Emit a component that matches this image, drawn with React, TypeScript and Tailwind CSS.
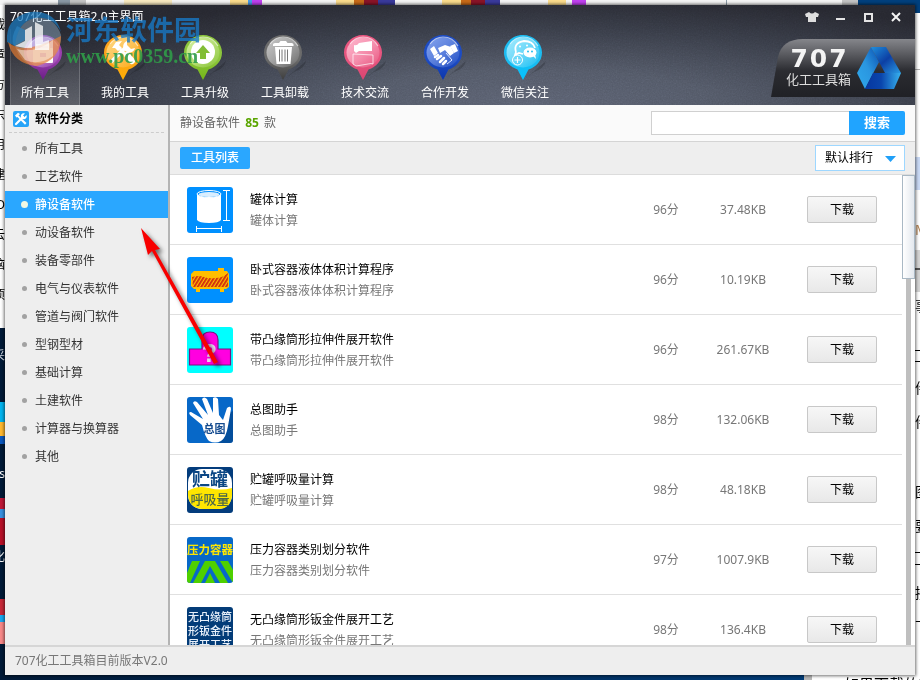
import React from "react";

const FONT = "font-['Noto_Sans','Noto_Sans_CJK_SC',sans-serif]";

/* ---------- toolbar pins ---------- */

function Pin({ id, light, mid, dark, children }: { id: string; light: string; mid: string; dark: string; children: React.ReactNode }) {
  return (
    <svg width="46" height="50" viewBox="0 0 46 50" aria-hidden="true">
      <defs>
        <linearGradient id={`pin-${id}`} x1="0" y1="0" x2="0" y2="1">
          <stop offset="0" stopColor={mid} />
          <stop offset="0.55" stopColor={mid} />
          <stop offset="1" stopColor={dark} />
        </linearGradient>
        <linearGradient id={`gloss-${id}`} x1="0" y1="0" x2="1" y2="1">
          <stop offset="0" stopColor={light} />
          <stop offset="0.55" stopColor={light} stopOpacity="0.55" />
          <stop offset="1" stopColor={light} stopOpacity="0" />
        </linearGradient>
      </defs>
      <path d="M24 45 L44 28 Q42 36 32 39 Z" fill="#000" opacity="0.18" />
      <path d="M21 2 C31.500 2 40 10 40 19.500 C40 28 34 34 26.500 36.500 L21 47 L15.500 36.500 C8 34 2 28 2 19.500 C2 10 10.500 2 21 2 Z" fill={`url(#pin-${id})`} />
      <ellipse cx="21" cy="19.500" rx="16.500" ry="15" fill={`url(#gloss-${id})`} />
      <path d="M8 11 Q13 4 21 4 Q31 4 36 13" fill="none" stroke="#fff" strokeWidth="1.200" opacity="0.6" />
      {children}
    </svg>
  );
}

const navItems = [
  {
    label: "所有工具",
    icon: (
      <Pin id="all" light="#e6b9ee" mid="#9a3fae" dark="#6a1d86">
        <path d="M15 12 h12 v4 h-12 z" fill="none" stroke="#fff" strokeWidth="2" />
        <rect x="11" y="15" width="20" height="15" rx="1" fill="#fff" />
        <rect x="18" y="20" width="6" height="4" fill="#b45fc4" />
      </Pin>
    ),
  },
  {
    label: "我的工具",
    icon: (
      <Pin id="mine" light="#ffd880" mid="#fba41c" dark="#ffae00">
        <path d="M10 28 L24 14" stroke="#fff" strokeWidth="3.500" strokeLinecap="round" />
        <path d="M25 8 A6 6 0 1 0 33 15 L29 16 L25 12 Z" fill="#fff" />
        <path d="M10 15 L14 9 L20 8 L17 12 L20 15 L16 18 L13 15 Z" fill="#fff" />
        <path d="M18 16 L23 21" stroke="#fff" strokeWidth="3" />
        <path d="M25 22 L30 28" stroke="#fff" strokeWidth="6" strokeLinecap="round" />
      </Pin>
    ),
  },
  {
    label: "工具升级",
    icon: (
      <Pin id="up" light="#d4f0a0" mid="#8cc63c" dark="#74b516">
        <circle cx="21" cy="19" r="12" fill="#fff" />
        <path d="M21 12 L28 20 H24 V26 H18 V20 H14 Z" fill="#82bd35" />
      </Pin>
    ),
  },
  {
    label: "工具卸载",
    icon: (
      <Pin id="del" light="#c8c8c8" mid="#6b6b6b" dark="#3e3e3e">
        <path d="M11 11.500 Q11 10 13 10 H17 L18.500 8 H24 L25.500 10 H29.500 Q31.500 10 31.500 11.500 V13 H11 Z" fill="#fff" />
        <path d="M13 14 H30 L28.500 31 H14.500 Z" fill="#fff" />
        <path d="M17.500 16.500 V28.500 M20 16.500 V28.500 M23 16.500 V28.500 M25.500 16.500 V28.500" stroke="#777" strokeWidth="1" />
      </Pin>
    ),
  },
  {
    label: "技术交流",
    icon: (
      <Pin id="chat" light="#ffb9cf" mid="#e8557f" dark="#d94470">
        <path d="M12 12 Q15 13 17 10 L30 8 V18 H17 L14 20 L12 18 Z" fill="#fff" />
        <path d="M11 21 L31 22 V31 L29 30.500 L14 33 L11 31 Z" fill="none" stroke="#fff" strokeWidth="1" opacity="0.7" />
      </Pin>
    ),
  },
  {
    label: "合作开发",
    icon: (
      <Pin id="co" light="#86a4ee" mid="#1d4cc4" dark="#0c36ad">
        <path d="M8 16 L12 13 L16 20 L12 23 Z M28 13 L33 11 L36 18 L32 20 Z" fill="#fff" />
        <path d="M16 15 L23 12 L29 14 L32 20 L28 23 L23 17 L18 20 Z" fill="#fff" />
        <path d="M13 24 l3 -2 M15 26 l4 -3 M18 29 l4 -4 M21 31 l3 -3" stroke="#fff" strokeWidth="2.500" strokeLinecap="round" />
        <path d="M24 20 L30 27 L25 31" fill="none" stroke="#dfe8ff" strokeWidth="1" />
      </Pin>
    ),
  },
  {
    label: "微信关注",
    icon: (
      <Pin id="wx" light="#a5ecff" mid="#1cbcf0" dark="#00c3ff">
        <path d="M14 19 Q11 10 22 8 Q31 8 33 15 M14 19 L13 22 L17 20 L21 21" fill="none" stroke="#fff" strokeWidth="1.800" />
        <circle cx="18" cy="13.500" r="1" fill="#fff" />
        <circle cx="25" cy="12.500" r="1" fill="#fff" />
        <ellipse cx="28" cy="19.500" rx="6.500" ry="5" fill="#fff" />
        <path d="M31 23 l3 3 l-1 -5 z" fill="#fff" />
        <circle cx="26" cy="18.500" r="1" fill="#23bdef" />
        <circle cx="30" cy="18.500" r="1" fill="#23bdef" />
        <circle cx="15.500" cy="27" r="5" fill="none" stroke="#fff" strokeWidth="1" />
        <path d="M12.500 27 h6 M15.500 24 v6" stroke="#fff" strokeWidth="1.200" />
      </Pin>
    ),
  },
];

/* ---------- tool thumbnails ---------- */

const thumb = "block size-[46px] shrink-0 rounded-[3px]";
const boldText = "font-['Noto_Sans_CJK_SC',sans-serif] font-bold";

const TankIcon = () => (
  <svg className={thumb} viewBox="0 0 46 46" aria-hidden="true">
    <rect width="46" height="46" fill="#0090ff" />
    <path d="M10 7 V33 Q12 36 22 36 Q32 36 34 33 V7 Z" fill="#fff" />
    <ellipse cx="22" cy="7" rx="12" ry="3.500" fill="#0090ff" stroke="#fff" strokeWidth="1" />
    <ellipse cx="22" cy="7.500" rx="10.500" ry="2.500" fill="#fff" opacity="0.85" />
    <path d="M36 3.500 h7 M36 33.500 h7 M39.500 3.500 v30 M9.500 39 v6 M34.500 39 v6 M9.500 41.500 h25" stroke="#fff" fill="none" />
  </svg>
);

const VesselIcon = () => (
  <svg className={thumb} viewBox="0 0 46 46" aria-hidden="true">
    <defs>
      <pattern id="hatch" width="3" height="3" patternUnits="userSpaceOnUse" patternTransform="rotate(32)">
        <rect width="1.800" height="3" fill="#d02a10" />
      </pattern>
    </defs>
    <rect width="46" height="46" fill="#0090ff" />
    <path d="M31 11 h6 v3 h3 l2 3 v13 l-3 2 h-2 v3 h-4 v-3 H13 v3 H9 v-3 H7 L4 29 V17 L7 14 H31 Z" fill="#ffbe00" />
    <path d="M5 20 Q12 18 17 20 T28 21 Q36 21 41 16 V30 H6 Z" fill="url(#hatch)" />
  </svg>
);

const FlangeIcon = () => (
  <svg className={thumb} viewBox="0 0 46 46" aria-hidden="true">
    <rect width="46" height="46" fill="#00ffff" />
    <path d="M15 22 V13 Q15 5 23 5 Q31 5 31 13 V22 H43.500 V38 H2.500 V22 Z" fill="#ff00e0" stroke="#7a1480" strokeWidth="1.200" />
    <text x="22.500" y="35" textAnchor="middle" fontSize="25" fill="#e8d6ee" className="font-['Liberation_Sans',sans-serif] font-bold">?</text>
  </svg>
);

const HandIcon = () => (
  <svg className={thumb} viewBox="0 0 46 46" aria-hidden="true">
    <rect width="46" height="46" fill="#0768c8" />
    <path d="M42 16 L46 14 V46 H32 Z" fill="#00336f" opacity="0.5" />
    <path d="M15 28 L3 18 Q1 15 4 15 L16 22 L6 6 Q7 3 10 5 L21 18 L15 2 Q17 -1 20 2 L26 16 L26 1 Q29 -1 31 2 L32 18 Q35 22 36 23 L40 11 Q44 8 44 12 L41 29 Q39 41 34 44 Q28 47 22 44 Q18 40 15 28 Z" fill="#fff" />
    <text x="27.500" y="36" textAnchor="middle" fontSize="11" fill="#134a8e" className={boldText}>总图</text>
  </svg>
);

const BreathIcon = () => (
  <svg className={thumb} viewBox="0 0 46 46" aria-hidden="true">
    <rect width="46" height="46" fill="#033c7c" />
    <rect x="1" y="2" width="44" height="40" rx="14" fill="#fff" />
    <path d="M1 24 Q10 18 22 21 T45 21 V28 Q44 42 31 42 H15 Q2 41 1 28 Z" fill="#ffe600" />
    <text x="23" y="19" textAnchor="middle" fontSize="18" fill="#0b4684" className={boldText}>贮罐</text>
    <text x="23" y="37" textAnchor="middle" fontSize="13" fill="#4c6848" className="font-['Noto_Sans_CJK_SC',sans-serif] font-medium">呼吸量</text>
  </svg>
);

const PressureIcon = () => (
  <svg className={thumb} viewBox="0 0 46 46" aria-hidden="true">
    <rect width="46" height="46" fill="#0768c8" />
    <text x="23" y="17" textAnchor="middle" fontSize="11.500" fill="#ffe600" className={boldText}>压力容器</text>
    <path d="M5 24 H13 L3 46 H0 V36 Z M18 24 H28 L41 46 H33 L23 29 L14 46 H6 Z M33 24 H41 L46 33 V46 Z M23 36 L28 46 H18 Z" fill="#4fd000" />
  </svg>
);

const SheetIcon = () => (
  <svg className={thumb} viewBox="0 0 46 46" aria-hidden="true">
    <rect width="46" height="46" fill="#033c78" />
    <g fontSize="11" fill="#e8f0fa" textAnchor="middle" className="font-['Noto_Sans_CJK_SC',sans-serif] font-medium">
      <text x="23" y="14">无凸缘筒</text>
      <text x="23" y="28">形钣金件</text>
      <text x="23" y="42">展开工艺</text>
    </g>
  </svg>
);

const tools = [
  { name: "罐体计算", score: "96分", size: "37.48KB", Icon: TankIcon },
  { name: "卧式容器液体体积计算程序", score: "96分", size: "10.19KB", Icon: VesselIcon },
  { name: "带凸缘筒形拉伸件展开软件", score: "96分", size: "261.67KB", Icon: FlangeIcon },
  { name: "总图助手", score: "98分", size: "132.06KB", Icon: HandIcon },
  { name: "贮罐呼吸量计算", score: "98分", size: "48.18KB", Icon: BreathIcon },
  { name: "压力容器类别划分软件", score: "97分", size: "1007.9KB", Icon: PressureIcon },
  { name: "无凸缘筒形钣金件展开工艺", score: "98分", size: "136.4KB", Icon: SheetIcon },
];

const categories = ["所有工具", "工艺软件", "静设备软件", "动设备软件", "装备零部件", "电气与仪表软件", "管道与阀门软件", "型钢型材", "基础计算", "土建软件", "计算器与换算器", "其他"];

/* ---------- desktop behind the window ---------- */

function Desktop() {
  return (
    <div className="absolute inset-0 flex flex-col overflow-hidden bg-[#001a38]" aria-hidden="true">
      <div className="flex h-[5px] shrink-0 bg-[#f4f4f4]">
        <span className="ml-[58px] w-3 bg-[#8a98a5]" />
        <span className="w-4 bg-[#c4c4c4]" />
        <span className="ml-[38px] w-12 bg-[#f8e9c0]" />
        <span className="ml-[58px] w-[18px] bg-[#fbdc8c]" />
        <span className="w-1 bg-[#4a9be8]" />
        <span className="w-[10px] bg-[#c040f0]" />
        <span className="ml-[74px] w-[18px] bg-[#fbdc8c]" />
        <span className="w-[10px] bg-[#c86a18]" />
        <span className="w-[14px] bg-[#8a1428]" />
        <span className="w-[17px] bg-[#3a3a9c]" />
        <span className="ml-[47px] w-[19px] bg-[#fbdc8c]" />
        <span className="w-[10px] bg-[#c86a18]" />
        <span className="w-[14px] bg-[#8a1428]" />
        <span className="w-[15px] bg-[#3a3a9c]" />
        <span className="ml-[48px] w-[18px] bg-[#fbdc8c]" />
        <span className="ml-[6px] w-[14px] bg-[#c040f0]" />
        <span className="ml-[140px] w-px bg-[#8a9aa5]" />
        <span className="ml-[115px] w-4 bg-[#c4c4c4]" />
        <span className="flex-1 bg-[#00407e]" />
      </div>
      <div className="flex min-h-0 flex-1 justify-between">
        <div className="flex w-[5px] flex-col overflow-hidden text-[12px] leading-[16px]">
          <div className="flex h-[323px] shrink-0 flex-col items-end gap-[14px] bg-white pt-[12px] text-black">
            <span>载</span><span>章</span><span>方</span><span>东</span><span>用</span><span>建</span><span>D</span><span>云</span><span>脑</span><span>项</span>
          </div>
          <span className="mt-[20px] flex justify-end text-[#d9dfe8]">采</span>
          <span className="mt-[38px] h-5 shrink-0 bg-[#00b4f0]" />
          <span className="h-[14px] shrink-0 bg-[#ffb930]" />
          <span className="h-[8px] shrink-0 bg-[#0a58c0]" />
          <span className="mt-[22px] flex h-4 shrink-0 justify-end text-white">s</span>
          <span className="mt-[16px] h-[11px] shrink-0 bg-[#c01838]" />
          <span className="h-[9px] shrink-0 bg-[#3890e0]" />
          <span className="h-[27px] shrink-0 bg-[#b81028]" />
          <span className="mt-[4px] flex h-4 shrink-0 justify-end text-white">化</span>
          <span className="mt-[34px] h-4 shrink-0 bg-[#c82838]" />
          <span className="h-[7px] shrink-0 bg-[#18a8f0]" />
          <span className="h-[22px] shrink-0 bg-[#f88888]" />
        </div>
        <div className="flex w-[5px] flex-col overflow-hidden bg-white text-[14px] leading-5 text-black">
          <span className="h-[8px] shrink-0 bg-[#00407e]" />
          <span className="mt-[56px] h-px shrink-0 bg-[#b0b0b0]" />
          <span className="mt-[87px] h-[33px] shrink-0 bg-[#c9d9f5]" />
          <span className="mt-[30px] shrink-0 text-[#b08050]">M</span>
          <span className="mt-[10px] h-[18px] shrink-0 bg-[#d4d4d4]" />
          <span className="h-[2px] shrink-0 bg-[#555]" />
          <span className="h-[22px] shrink-0 bg-[#d4d4d4]" />
          <span className="mt-[4px] shrink-0">事</span>
          <span className="mt-[34px] h-px shrink-0 bg-black" />
          <span className="mt-[10px] h-px shrink-0 bg-black" />
          <span className="mt-[16px] shrink-0">件</span>
          <span className="mt-[14px] shrink-0">件</span>
          <span className="mt-[50px] shrink-0">图</span>
          <span className="mt-[14px] shrink-0">要</span>
          <span className="mt-[16px] h-px shrink-0 bg-black" />
          <span className="mt-[11px] h-px shrink-0 bg-black" />
          <span className="mt-[18px] shrink-0">接</span>
          <span className="mt-[14px] shrink-0">下</span>
        </div>
      </div>
      <div className="flex h-[5px] shrink-0 overflow-hidden">
        <span className="flex-1 bg-linear-to-r from-[#001a38] to-[#003c78]" />
        <span className="w-2 bg-[#b8b8b8]" />
        <span className="w-[108px] bg-white pt-[2px] pl-[32px] text-[15px] leading-[15px] whitespace-nowrap text-black">如果下载的软</span>
      </div>
    </div>
  );
}

/* ---------- header ---------- */

function Brand() {
  return (
    <div className="relative mt-[10px] flex h-[58px] w-36 shrink-0 items-center gap-[6px] pl-[15px]">
      <svg className="absolute inset-0 size-full" viewBox="0 0 144 58" preserveAspectRatio="none" aria-hidden="true">
        <defs>
          <linearGradient id="plate" x1="0" y1="0" x2="0" y2="1">
            <stop offset="0" stopColor="#85868b" />
            <stop offset="0.25" stopColor="#5c5d62" />
            <stop offset="0.55" stopColor="#2b2c31" />
            <stop offset="1" stopColor="#202126" />
          </linearGradient>
        </defs>
        <path d="M0 58 L7 18 Q11 0 32 0 H144 V58 Z" fill="url(#plate)" />
      </svg>
      <div className="relative flex flex-col items-center text-[#f4f4f4]">
        <span className="flex gap-[2px] font-['DejaVu_Sans',sans-serif] text-[25px] leading-[22px] font-bold">
          <span>7</span>
          <span>0</span>
          <span>7</span>
        </span>
        <span className="text-[13px] leading-[18px] text-[#dcdcdc]">化工工具箱</span>
      </div>
      <svg className="relative" width="44" height="44" viewBox="0 0 44 44" aria-hidden="true">
        <defs>
          <linearGradient id="bladeA" x1="0" y1="1" x2="1" y2="0">
            <stop offset="0" stopColor="#2fa9ec" />
            <stop offset="0.5" stopColor="#2a96e0" />
            <stop offset="1" stopColor="#0a4fb0" />
          </linearGradient>
          <linearGradient id="bladeB" x1="0" y1="0" x2="1" y2="1">
            <stop offset="0" stopColor="#1f8fdc" />
            <stop offset="0.5" stopColor="#0c3fa4" />
            <stop offset="1" stopColor="#2a9ce4" />
          </linearGradient>
          <linearGradient id="bladeC" x1="0" y1="0" x2="1" y2="0">
            <stop offset="0" stopColor="#0636a0" />
            <stop offset="0.45" stopColor="#0a45ac" />
            <stop offset="1" stopColor="#38b4f0" />
          </linearGradient>
        </defs>
        <path d="M0 27 L14 1 L22 16 L8 43 Z" fill="url(#bladeA)" />
        <path d="M14 1 H29 L44 27 H28 Z" fill="url(#bladeB)" />
        <path d="M16 27 H44 L37 43 H8 Z" fill="url(#bladeC)" />
      </svg>
    </div>
  );
}

const controlButton = "flex h-6 w-7 items-center justify-center";

function Header() {
  return (
    <header className="relative shrink-0 overflow-hidden bg-[radial-gradient(ellipse_at_58%_100%,#5a6070_0%,#525866_25%,#373b46_55%,#26272f_78%)]">
      <svg className="absolute inset-0 size-full opacity-25 mix-blend-overlay" aria-hidden="true">
        <filter id="grain">
          <feTurbulence type="fractalNoise" baseFrequency="0.7" numOctaves="2" />
          <feColorMatrix type="saturate" values="0" />
        </filter>
        <rect width="100%" height="100%" filter="url(#grain)" />
      </svg>
      <div className="relative flex h-6 items-center justify-between pr-[5px] pl-[5px]">
        <h1 className="text-[12px] leading-4 text-white">707化工工具箱2.0主界面</h1>
        <div className="flex">
          <button type="button" aria-label="皮肤" className={controlButton}>
            <svg width="14" height="12" viewBox="0 0 14 12"><path d="M4 1 Q7 4 10 1 L14 3 L13 6 L11 6 V11 H3 V6 L1 6 L0 3 Z" fill="#dedede" /></svg>
          </button>
          <button type="button" aria-label="最小化" className={controlButton}>
            <span className="mt-1 h-[2px] w-[9px] bg-[#e4e4e4]" />
          </button>
          <button type="button" aria-label="最大化" className={controlButton}>
            <span className="size-[9px] border-2 border-[#e4e4e4]" />
          </button>
          <button type="button" aria-label="关闭" className={controlButton}>
            <svg width="10" height="10" viewBox="0 0 10 10"><path d="M1 1 L9 9 M9 1 L1 9" stroke="#f4f4f4" strokeWidth="2" /></svg>
          </button>
        </div>
      </div>
      <div className="relative flex justify-between">
        <nav className="flex gap-[10px] pl-[5px]">
          {navItems.map((item, i) => (
            <button
              key={item.label}
              type="button"
              className={`flex h-[76px] w-[70px] flex-col items-center pt-1 text-[12px] leading-5 text-white ${i === 0 ? "bg-linear-to-b from-transparent to-white/20 shadow-[inset_-1px_0_0_#ffffff30,inset_1px_0_0_#ffffff20]" : ""}`}
            >
              {item.icon}
              {item.label}
            </button>
          ))}
        </nav>
        <Brand />
      </div>
    </header>
  );
}

/* ---------- body ---------- */

function Sidebar() {
  return (
    <aside className="w-[165px] shrink-0 border-r-2 border-[#b4b4b4] bg-[#eeeeee]">
      <h2 className="mx-1 flex h-7 items-center gap-[6px] border-b border-dashed border-[#cccccc] pl-1 text-[12px] font-bold text-black">
        <svg width="16" height="16" viewBox="0 0 16 16" aria-hidden="true">
          <rect width="16" height="16" rx="2" fill="#27a4f8" />
          <path d="M3 13 L10 6" stroke="#fff" strokeWidth="2.200" strokeLinecap="round" />
          <path d="M13.500 4 L11.500 6 L10 4.500 L12 2.500 A3 3 0 1 0 13.500 4 Z" fill="#fff" />
          <path d="M2 4.500 L5 1.800 L7 3 L5.500 4.500 L13.500 12 L12 13.800 L4.500 6 L3.500 6.500 Z" fill="#fff" />
        </svg>
        软件分类
      </h2>
      <ul className="pt-[1px]">
        {categories.map((c) => {
          const active = c === "静设备软件";
          return (
            <li key={c} className="h-7 pt-px">
              <a href="#" className={`flex h-[27px] items-center gap-[8px] pl-[16px] text-[12px] ${active ? "bg-[#2aa7ff] font-medium text-white" : "text-[#333333]"}`}>
                <span className="flex w-[6px] justify-center">
                  <span className={`shrink-0 rounded-full ${active ? "size-[7px] bg-[#f0f8e4]" : "size-[5px] bg-[#a2a2a2]"}`} />
                </span>
                {c}
              </a>
            </li>
          );
        })}
      </ul>
    </aside>
  );
}

function ToolRow({ tool }: { tool: (typeof tools)[number] }) {
  return (
    <li className="flex h-[70px] shrink-0 items-center border-b border-[#e0e0e0] pr-[25px] pl-[17px] text-[12px]">
      <tool.Icon />
      <div className="ml-[17px] min-w-0 flex-1 leading-[21px]">
        <h3 className="text-black">{tool.name}</h3>
        <p className="text-[#777777]">{tool.name}</p>
      </div>
      <span className="w-[60px] text-center text-[#777777]">{tool.score}</span>
      <span className="w-[94px] text-center text-[#777777]">{tool.size}</span>
      <button type="button" className="ml-[17px] h-[27px] w-[70px] rounded-[2px] border border-[#c8c8c8] bg-linear-to-b from-[#f7f7f7] to-[#e8e8e8] text-black">
        下载
      </button>
    </li>
  );
}

function Content() {
  return (
    <main className="flex min-w-0 flex-1 flex-col bg-white">
      <div className="flex h-[37px] shrink-0 items-center justify-between border-b border-[#d4d4d4] bg-[#fafafa] px-[10px] text-[12px]">
        <p className="text-[#666666]">
          静设备软件 <b className="mx-[2px] text-[#5aa500]">85</b> 款
        </p>
        <form className="flex" onSubmit={(e) => e.preventDefault()}>
          <input aria-label="搜索工具" className="h-6 w-[198px] border border-r-0 border-[#d0d0d0] bg-white px-2 outline-none" />
          <button type="submit" className="h-6 w-14 rounded-r-[2px] bg-[#20a4ff] text-[13px] font-bold text-white">
            搜索
          </button>
        </form>
      </div>
      <div className="flex h-[33px] shrink-0 items-center justify-between border-b border-[#dcdcdc] bg-[#eeeeee] px-[10px]">
        <button type="button" className="h-[22px] w-[70px] rounded-[2px] bg-[#2aa7ff] text-[12px] font-medium text-white">
          工具列表
        </button>
        <div className="relative">
          <select aria-label="排序方式" className="block h-[26px] w-[90px] appearance-none border border-[#9ed7ff] bg-white pl-[9px] text-[12px] text-black outline-none">
            <option>默认排行</option>
          </select>
          <svg className="pointer-events-none absolute top-[11px] right-[9px]" width="11" height="6" viewBox="0 0 11 6" aria-hidden="true">
            <path d="M0 0 H11 L5.500 6 Z" fill="#20a0f8" />
          </svg>
        </div>
      </div>
      <div className="flex min-h-0 flex-1">
        <ul className="min-w-0 flex-1 overflow-hidden">
          {tools.map((t) => (
            <ToolRow key={t.name} tool={t} />
          ))}
        </ul>
        <div className="flex w-[13px] flex-col items-center">
          <div className="h-[104px] w-full shrink-0 border border-[#a9b8c4] bg-linear-to-r from-white to-[#e3e8ee]" />
          <div className="w-[5px] flex-1 bg-[#bfbfbf]" />
        </div>
      </div>
    </main>
  );
}

/* ---------- overlays ---------- */

function Watermark() {
  return (
    <div className="pointer-events-none absolute top-[10px] left-[5px] flex">
      <svg width="58" height="58" viewBox="0 0 58 58" aria-hidden="true">
        <path d="M2 32 Q0 8 25 2 Q50 0 56 22 Q48 6 30 8 Q12 12 10 36 Z" fill="#1b78bc" opacity="0.75" />
        <path d="M10 36 Q12 12 30 8 Q50 6 56 25 Q56 50 30 56 Q16 54 10 36 Z" fill="#9fc4de" opacity="0.4" />
        <path d="M3 32 Q18 46 56 26 Q56 50 32 56 Q8 54 3 32 Z" fill="#f08030" opacity="0.65" />
        <path d="M12 39 Q30 44 48 30 V46 Q34 56 20 50 Z" fill="#fff" opacity="0.45" />
        <path d="M10 36 L20 31 V20 L27 16 V38 H20 Z M30 36 V12 L38 16 V32 L44 30 V40 H30 Z" fill="#fff" opacity="0.75" />
        <path d="M9 36 Q5 28 12 16 L20 20 V30 Z" fill="#2b80bc" opacity="0.7" />
      </svg>
      <div className="flex flex-col pl-[3px]">
        <span className="pt-[3px] font-['Noto_Sans_CJK_SC',sans-serif] text-[27px] leading-[32px] font-bold whitespace-nowrap text-[#1878c4]/80">河东软件园</span>
        <span className="font-['Liberation_Serif',serif] text-[20px] leading-[22px] font-bold text-[#309c48]/90">www.pc0359.cn</span>
      </div>
    </div>
  );
}

function PointerArrow() {
  return (
    <svg className="pointer-events-none absolute top-[220px] left-[130px] drop-shadow-[3px_3px_2px_#00000088]" width="100" height="155" viewBox="0 0 100 155" aria-hidden="true">
      <path d="M11 8 L30 29 L25 30 L88 142 L84 144 L22 31 L18 35 Z" fill="#f80000" />
    </svg>
  );
}

export default function App() {
  return (
    <div className={`relative flex h-screen overflow-hidden p-[5px] ${FONT}`}>
      <Desktop />
      <div className="relative flex min-w-0 flex-1 flex-col shadow-[0_0_3px_1px_#00000090]">
        <Header />
        <div className="flex min-h-0 flex-1">
          <Sidebar />
          <Content />
        </div>
        <footer className="flex h-[30px] shrink-0 items-center border-t-2 border-[#d6d6d6] bg-[#eeeeee] pl-[10px] text-[12px] text-[#777777]">
          707化工工具箱目前版本V2.0
        </footer>
      </div>
      <Watermark />
      <PointerArrow />
    </div>
  );
}
